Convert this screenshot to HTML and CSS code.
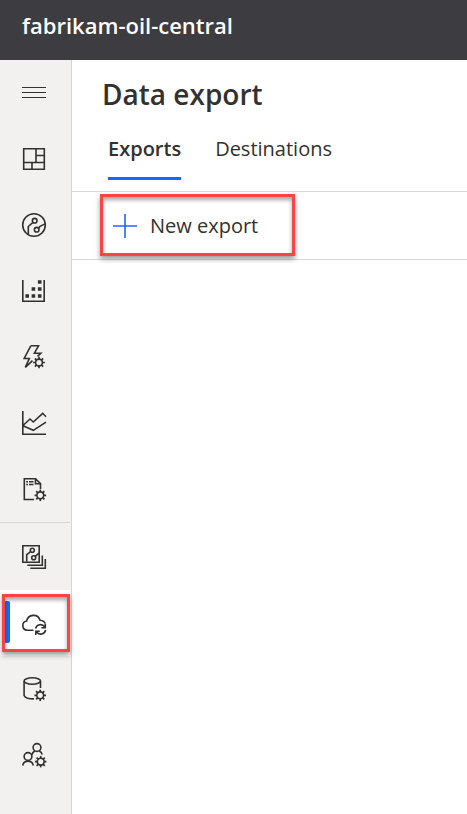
FILE: index.html
```html
<!DOCTYPE html>
<html lang="en">
<head>
<meta charset="utf-8">
<title>Data export</title>
<link rel="stylesheet" href="styles.css">
</head>
<body>
<svg class="defs" aria-hidden="true">
  <symbol id="gear" viewBox="-6 -6 12 12">
    <circle r="3.4"/>
    <path d="M0-3.4V-5.9M0 3.4V5.9M-3.4 0H-5.9M3.4 0H5.9M-2.4-2.4L-4.1-4.1M2.4-2.4L4.1-4.1M-2.4 2.4L-4.1 4.1M2.4 2.4L4.1 4.1" stroke-width="1.7"/>
  </symbol>
</svg>
<header class="topbar">fabrikam-oil-central</header>
<div class="shell">
  <nav class="sidebar" aria-label="Main">
    <button class="item" aria-label="Menu"><svg class="icon thin" viewBox="0 0 24 24"><path d="M0 6.5H24M0 11.5H24M0 16.5H24"/></svg></button>
    <a class="item" href="#" aria-label="Dashboard"><svg class="icon" viewBox="0 0 24 24"><path d="M1.7 1.7H22.3V22.3H1.7ZM14 1.7V15.5M1.7 15.5H22.3M14 8.5H22.3M10 15.5V22.3"/></svg></a>
    <a class="item" href="#" aria-label="Devices"><svg class="icon" viewBox="0 0 24 24"><circle cx="12" cy="12" r="11.3"/><circle cx="12.7" cy="7.7" r="2.3"/><circle cx="14.7" cy="16.7" r="2.3"/><path d="M11 9.3L6.3 13.5V21.5M16.4 15.2L18 13.4L23 10.9"/></svg></a>
    <a class="item" href="#" aria-label="Device explorer"><svg class="icon" viewBox="0 0 24 24"><path d="M.8 1V22.3H22.2V1"/><path class="solid" d="M3.4 15.2h3.6v3.6h-3.6zM9.6 15.2h3.6v3.6h-3.6zM15.9 15.2h3.6v3.6h-3.6zM9.6 8.2h3.6v3.6h-3.6zM15.9 8.2h3.6v3.6h-3.6zM15.9 1.2h3.6v3.6h-3.6z"/></svg></a>
    <a class="item" href="#" aria-label="Rules"><svg class="icon" viewBox="0 0 24 24"><path d="M8.8.8H16.5L12.4 8.2H18.8L15.5 11.4M8.8.8L2.2 13.5H7.3L3.3 22.3L10.5 15.7"/><use href="#gear" x="11" y="11.5" width="12" height="12"/></svg></a>
    <a class="item" href="#" aria-label="Analytics"><svg class="icon" viewBox="0 0 24 24"><path d="M.8 0V23.2H24M1 14.5L8 8L11.3 11L20.7 2.3L24 5.7M1 14.8L11.3 19.3L24 11.2"/></svg></a>
    <a class="item" href="#" aria-label="Jobs"><svg class="icon" viewBox="0 0 24 24"><path d="M12 22.5H2.3V1.7H13.5L18.5 6.7V12M13.5 1.7V6.7H18.5"/><path d="M4.2 4.7H6M7 4.7H11.5M4.2 7.5H6M7 7.5H11.5"/><use href="#gear" x="12.3" y="12.3" width="12" height="12"/></svg></a>
    <hr class="divider">
    <a class="item" href="#" aria-label="Device templates"><svg class="icon" viewBox="0 0 24 24"><path d="M.8.8H17.2V17.2H.8Z"/><circle cx="10.3" cy="5.2" r="2"/><circle cx="11.7" cy="12.7" r="2"/><path d="M8.7 6.6L4.7 9.7V16.8M13.2 11.3L17 8.2M20.3 10.5V20.3H5.3M23.3 14V23.3H8.3"/></svg></a>
    <a class="item active" href="#" aria-label="Data export" aria-current="page"><svg class="icon" viewBox="0 -2 24 24"><path d="M11.5 17.3H5.2A4.7 4.7 0 0 1 4.6 8A7 7 0 0 1 18.1 7.2Q22.5 7.7 23.2 10.5"/><path d="M13.6 15.5A5 5 0 0 1 22.6 13.8M23.3 10.8V14.8H19.3M23.6 17A5 5 0 0 1 14.6 19M13.8 22V18.2H17.8"/></svg><span class="callout callout-nav"></span></a>
    <a class="item" href="#" aria-label="Data management"><svg class="icon" viewBox="0 0 24 24"><ellipse cx="10.3" cy="4" rx="8.2" ry="3.2"/><path d="M2.1 4V18.5Q3.5 22 12 21.9M18.5 4V11"/><use href="#gear" x="12.2" y="12.3" width="12" height="12"/></svg></a>
    <a class="item" href="#" aria-label="Administration"><svg class="icon" viewBox="0 0 24 24"><circle cx="15" cy="4.5" r="3.9"/><circle cx="6" cy="13.5" r="3.9"/><path d="M.7 22.5A5.4 5.4 0 0 1 11.3 22.5M9.7 12Q10.6 9.2 12.7 8M17.3 8Q19.7 9.3 20.2 11.7"/><use href="#gear" x="12.7" y="12.7" width="12" height="12"/></svg></a>
  </nav>
  <main class="content">
    <h1 class="title">Data export</h1>
    <div class="tabs" role="tablist">
      <button class="tab selected" role="tab" aria-selected="true">Exports</button>
      <button class="tab" role="tab" aria-selected="false">Destinations</button>
    </div>
    <div class="toolbar">
      <button class="command"><svg class="icon plus" viewBox="0 0 24 24" aria-hidden="true"><path d="M12 0V24M0 12H24"/></svg>New export</button>
      <span class="callout callout-command"></span>
    </div>
  </main>
</div>
</body>
</html>
```
FILE: styles.css
```css
* { box-sizing: border-box; }
body {
  margin: 0;
  min-height: 100vh;
  display: flex;
  flex-direction: column;
  background: #fff;
  color: #323130;
  font-family: "Segoe UI", "Open Sans", sans-serif;
  font-size: 20px;
}
button {
  border: 0;
  padding: 0;
  background: none;
  color: inherit;
  font: inherit;
}
.defs { position: absolute; width: 0; height: 0; }
.topbar {
  height: 60px;
  padding: 7px 22px;
  background: #3d3c41;
  color: #fff;
  font-size: 22px;
  font-weight: 600;
  line-height: 36px;
}
.shell { flex: 1; display: flex; }
.sidebar {
  flex: none;
  width: 72px;
  padding-right: 1px;
  display: flex;
  flex-direction: column;
  background: #f2f1f0;
  border-right: 1px solid #d4d6d8;
}
.item {
  position: relative;
  height: 66px;
  padding-left: 22px;
  display: flex;
  align-items: center;
}
.icon {
  width: 24px;
  height: 24px;
  overflow: visible;
  fill: none;
  stroke: #323130;
  stroke-width: 1.6;
}
.thin { stroke-width: 1; }
.solid { fill: #323130; stroke: none; }
.divider {
  width: 100%;
  margin: 0 0 1px;
  border: 0;
  border-top: 1px solid #d4d6d8;
}
.active { background: #fff; }
.active::before {
  content: "";
  position: absolute;
  left: 4px;
  top: 11px;
  width: 6px;
  height: 42px;
  border-radius: 2px;
  background: #136bfb;
}
.callout {
  position: absolute;
  border: 3px solid #fc4444;
  box-shadow: 0 3px 5px rgba(0, 0, 0, .4), inset 0 3px 4px rgba(0, 0, 0, .35);
  pointer-events: none;
}
.callout-nav { inset: 4px 0 4px 2px; }
.content { flex: 1; min-width: 0; }
.title {
  margin: 0;
  padding: 14px 30px 1px;
  font-size: 28px;
  font-weight: 600;
  line-height: 40px;
}
.tabs {
  display: flex;
  gap: 34px;
  padding: 14px 36px 11px;
}
.tab {
  height: 51px;
  padding-bottom: 9px;
  border-bottom: 3px solid transparent;
}
.selected { border-color: #136bfb; font-weight: 600; }
.toolbar {
  position: relative;
  height: 69px;
  padding-left: 41px;
  display: flex;
  align-items: center;
  border-top: 1px solid #d9d9d9;
  border-bottom: 1px solid #d9d9d9;
}
.command { display: flex; align-items: center; gap: 13px; }
.plus { stroke: #2266f0; }
.callout-command { left: 28px; top: 2px; width: 195px; height: 62px; }
```
